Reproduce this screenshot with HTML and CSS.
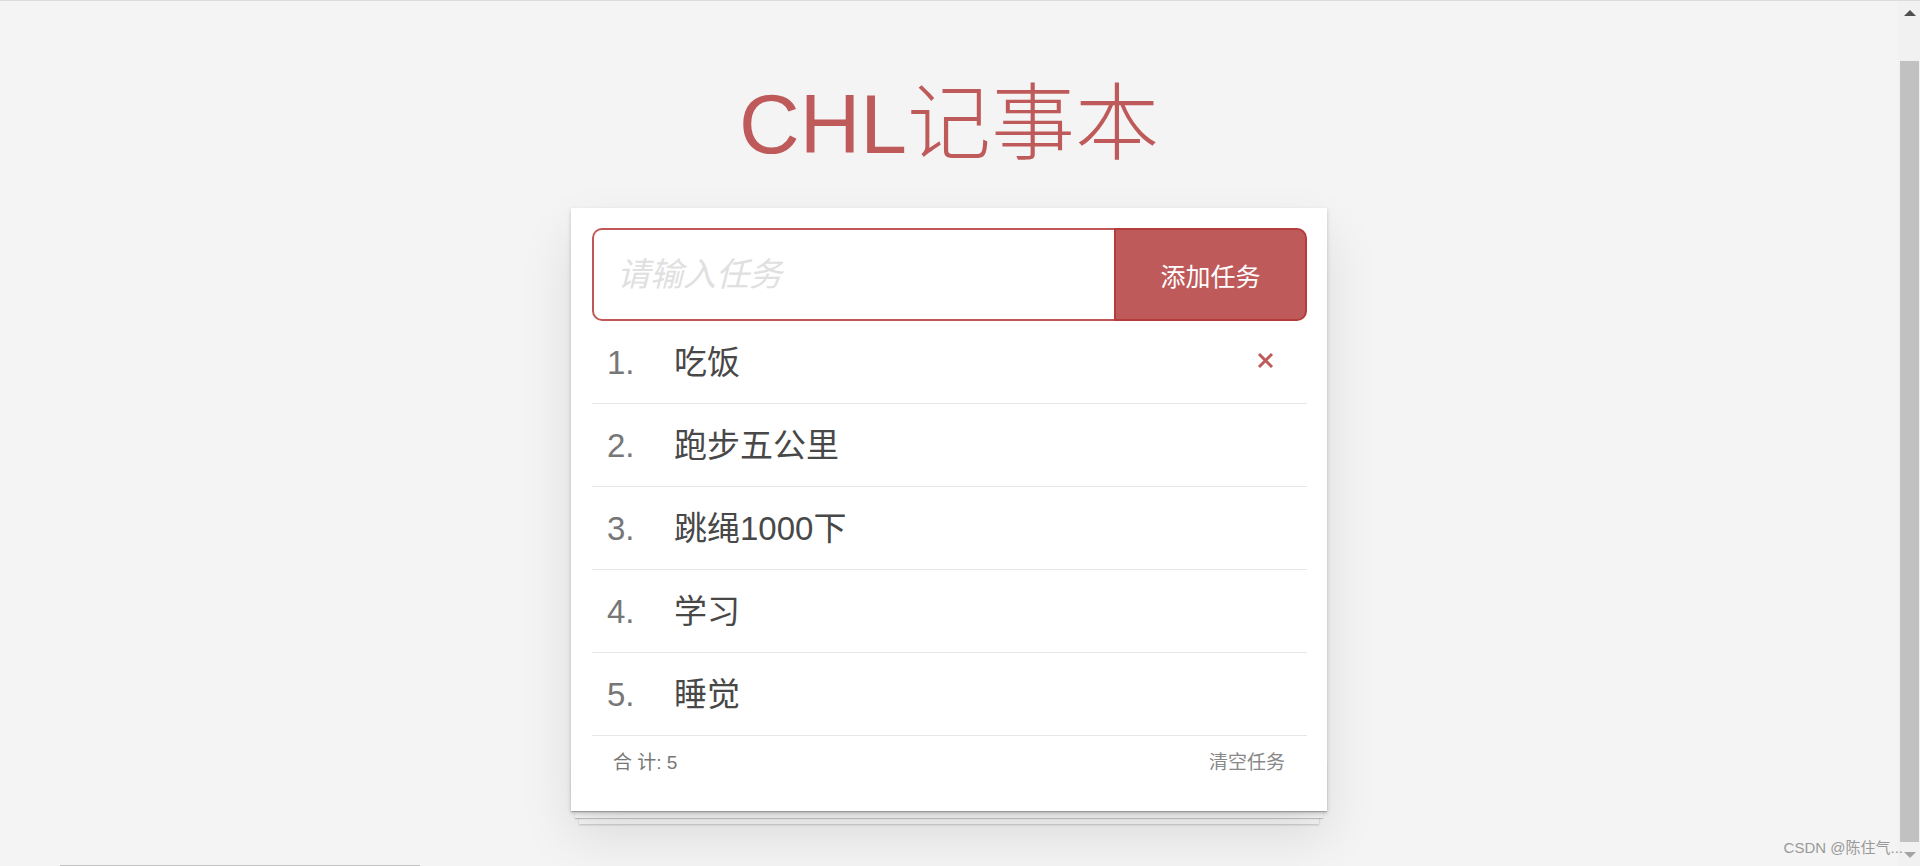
FILE: index.html
```html
<!DOCTYPE html>
<html lang="zh">
  <head>
    <meta charset="UTF-8" />
    <meta name="viewport" content="width=device-width, initial-scale=1.0" />
    <title>CHL记事本</title>
    <link rel="stylesheet" href="styles.css">
  </head>
  <body>
    <main class="page">
      <h1 class="title">CHL记事本</h1>
      <section class="notepad">
        <div class="input-group">
          <input type="text" class="new-todo" placeholder="请输入任务" />
          <button class="add">添加任务</button>
        </div>
        <ul class="todo-list">
          <li class="todo">
            <span class="index">1.</span>
            <span class="text">吃饭</span>
            <svg class="destroy" width="17" height="17" viewBox="0 0 17 17">
              <path d="M2 2 L15 15 M15 2 L2 15" stroke="#bf5a5a" stroke-width="3" fill="none" />
            </svg>
          </li>
          <li class="todo">
            <span class="index">2.</span>
            <span class="text">跑步五公里</span>
          </li>
          <li class="todo">
            <span class="index">3.</span>
            <span class="text">跳绳1000下</span>
          </li>
          <li class="todo">
            <span class="index">4.</span>
            <span class="text">学习</span>
          </li>
          <li class="todo">
            <span class="index">5.</span>
            <span class="text">睡觉</span>
          </li>
        </ul>
        <footer class="footer">
          <span class="count">合 计: 5</span>
          <span class="clear">清空任务</span>
        </footer>
      </section>
      <div class="hbar"></div>
    </main>
    <aside class="scrollbar">
      <div class="arrow-up"></div>
      <div class="thumb"></div>
      <div class="arrow-down"></div>
    </aside>
    <div class="watermark">CSDN @陈住气...</div>
  </body>
</html>
```

FILE: styles.css
```css
* {
  box-sizing: border-box;
}
body {
  margin: 0;
  padding: 0;
  height: 866px;
  overflow: hidden;
  background-color: #f4f4f4;
  border-top: 1px solid #dcdcdc;
  font-family: "Liberation Sans", "Noto Sans CJK SC", sans-serif;
  display: flex;
  position: relative;
}
.page {
  flex: 1;
  position: relative;
  display: flex;
  flex-direction: column;
  align-items: center;
  padding-top: 73px;
}
.title {
  margin: 0 0 34px;
  font-size: 84px;
  line-height: 100px;
  font-weight: 300;
  color: #bf5a5a;
}
.notepad {
  position: relative;
  width: 756px;
  padding: 20px 20px 0 21px;
  background-color: #fff;
  box-shadow: 0 2px 4px 0 rgba(0, 0, 0, 0.2), 0 25px 50px 0 rgba(0, 0, 0, 0.1);
}
.notepad::after {
  content: "";
  position: absolute;
  left: 0;
  right: 0;
  bottom: 0;
  height: 50px;
  z-index: -1;
  box-shadow: 0 1px 1px rgba(0, 0, 0, 0.2), 0 11px 0 -4px #f6f6f6,
    0 12px 1px -4px rgba(0, 0, 0, 0.2), 0 21px 0 -8px #f6f6f6,
    0 22px 2px -8px rgba(0, 0, 0, 0.2);
}
.input-group {
  display: flex;
  height: 93px;
}
.new-todo {
  flex: 1;
  min-width: 0;
  height: 100%;
  padding: 0 0 0 23px;
  border: 2px solid #c05858;
  border-right: none;
  border-radius: 10px 0 0 10px;
  font-family: "Liberation Sans", "Noto Sans CJK SC", sans-serif;
  font-size: 33px;
  font-style: italic;
  color: #484848;
  outline: none;
}
.new-todo::placeholder {
  color: #e0e0e0;
}
.add {
  width: 193px;
  height: 100%;
  border: 2px solid #b43c3c;
  border-radius: 0 10px 10px 0;
  background-color: #bf5a5a;
  color: #fff;
  font-family: "Liberation Sans", "Noto Sans CJK SC", sans-serif;
  font-size: 25px;
  cursor: pointer;
}
.todo-list {
  list-style: none;
  margin: 0;
  padding: 0;
}
.todo {
  display: flex;
  align-items: baseline;
  height: 83px;
  padding: 22px 33px 0 15px;
  border-bottom: 1px solid #e6e6e6;
  font-size: 33px;
  line-height: 40px;
}
.index {
  width: 67px;
  flex-shrink: 0;
  color: #777;
}
.text {
  flex: 1;
  color: #484848;
}
.destroy {
  flex-shrink: 0;
  align-self: flex-start;
  margin-top: 9px;
}
.footer {
  display: flex;
  justify-content: space-between;
  height: 75px;
  padding: 15px 22px 0 21px;
  font-size: 19px;
  line-height: 24px;
  color: #777;
}
.clear {
  color: #888;
  cursor: pointer;
}
.hbar {
  position: absolute;
  left: 60px;
  bottom: 0;
  width: 360px;
  height: 1px;
  background-color: #c1c1c1;
}
.scrollbar {
  width: 22px;
  flex-shrink: 0;
  display: flex;
  flex-direction: column;
  align-items: center;
  padding: 9px 1px 0 2px;
  background-color: #f1f1f1;
}
.arrow-up {
  width: 0;
  height: 0;
  border-left: 6px solid transparent;
  border-right: 6px solid transparent;
  border-bottom: 6px solid #505050;
}
.thumb {
  width: 100%;
  height: 781px;
  margin-top: 45px;
  background-color: #c1c1c1;
}
.arrow-down {
  width: 0;
  height: 0;
  margin-top: 10px;
  border-left: 6px solid transparent;
  border-right: 6px solid transparent;
  border-top: 6px solid #a3a3a3;
}
.watermark {
  position: absolute;
  right: 17px;
  bottom: 9px;
  font-size: 15px;
  line-height: 18px;
  color: #999;
}
```
